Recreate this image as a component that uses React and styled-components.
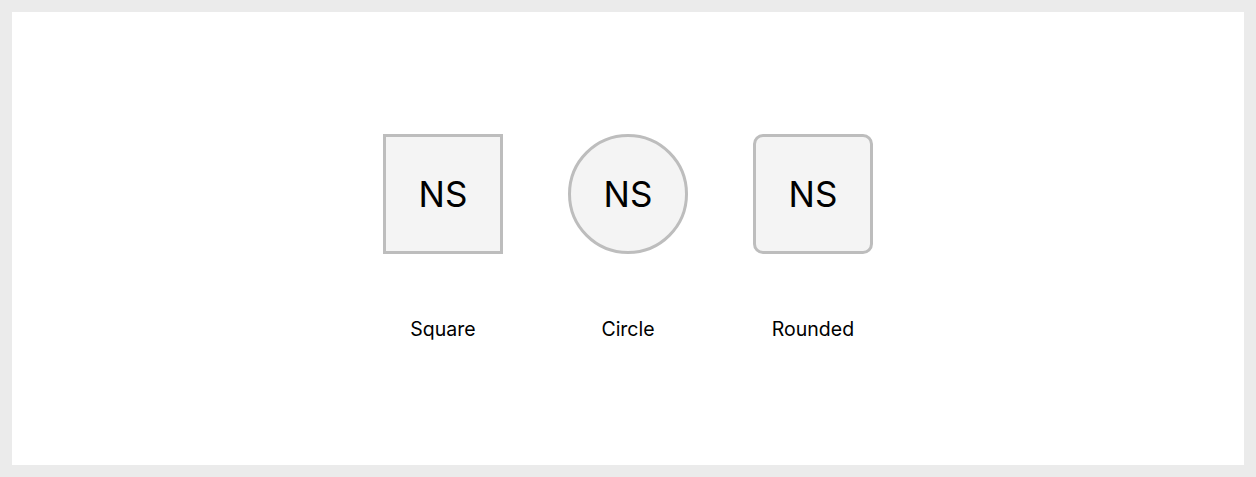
import React from 'react'
import styled, { createGlobalStyle } from 'styled-components'

const GlobalStyle = createGlobalStyle`
    html, body {
        margin: 0;
        padding: 0;
        background: #ebebeb;
        font-family: Inter, "Noto Sans", sans-serif;
    }
`

const Page = styled.div`
    padding: 12px;
    height: 477px;
    box-sizing: border-box;
`

const Panel = styled.div`
    background: #fff;
    height: 100%;
    display: flex;
    align-items: center;
    justify-content: center;
    gap: 65px;
`

const Item = styled.div`
    display: flex;
    flex-direction: column;
    align-items: center;
    gap: 62px;
`

const radii = { square: '0', circle: '50%', rounded: '10px' }

const Avatar = styled.div`
    width: 120px;
    height: 120px;
    box-sizing: border-box;
    border: 3px solid #bdbdbd;
    border-radius: ${p => radii[p.$shape]};
    background: #f4f4f4;
    display: flex;
    align-items: center;
    justify-content: center;
    font-size: 35px;
    color: #000;
`

const Label = styled.span`
    font-size: 19.5px;
    line-height: 27px;
    color: #000;
`

const items = [
    { shape: 'square', label: 'Square' },
    { shape: 'circle', label: 'Circle' },
    { shape: 'rounded', label: 'Rounded' },
]

export default function App() {
    return (
        <>
            <GlobalStyle />
            <Page>
                <Panel>
                    {items.map(it => (
                        <Item key={it.shape}>
                            <Avatar $shape={it.shape}>NS</Avatar>
                            <Label>{it.label}</Label>
                        </Item>
                    ))}
                </Panel>
            </Page>
        </>
    )
}
